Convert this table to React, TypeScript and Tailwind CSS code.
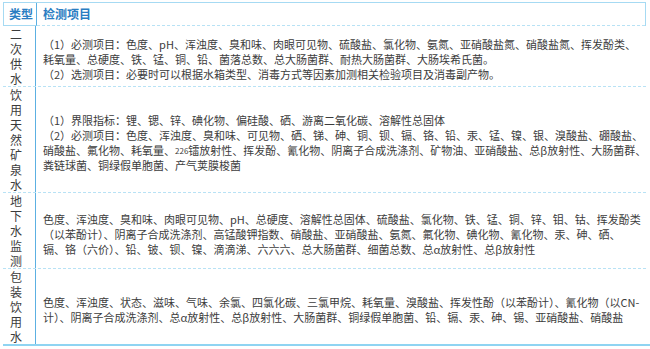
const rows: { type: string; lines: React.ReactNode[] }[] = [
  {
    type: "二次供水",
    lines: [
      "（1）必测项目：色度、pH、浑浊度、臭和味、肉眼可见物、硫酸盐、氯化物、氨氮、亚硝酸盐氮、硝酸盐氮、挥发酚类、",
      "耗氧量、总硬度、铁、锰、铜、铅、菌落总数、总大肠菌群、耐热大肠菌群、大肠埃希氏菌。",
      "（2）选测项目：必要时可以根据水箱类型、消毒方式等因素加测相关检验项目及消毒副产物。",
    ],
  },
  {
    type: "饮用天然矿泉水",
    lines: [
      "（1）界限指标：锂、锶、锌、碘化物、偏硅酸、硒、游离二氧化碳、溶解性总固体",
      "（2）必测项目：色度、浑浊度、臭和味、可见物、硒、锑、砷、铜、钡、镉、铬、铅、汞、锰、镍、银、溴酸盐、硼酸盐、",
      <>
        硝酸盐、氟化物、耗氧量、<sup className="text-[8px] relative -top-[1px]">226</sup>
        镭放射性、挥发酚、氰化物、阴离子合成洗涤剂、矿物油、亚硝酸盐、总β放射性、大肠菌群、
      </>,
      "粪链球菌、铜绿假单胞菌、产气荚膜梭菌",
    ],
  },
  {
    type: "地下水监测",
    lines: [
      "色度、浑浊度、臭和味、肉眼可见物、pH、总硬度、溶解性总固体、硫酸盐、氯化物、铁、锰、铜、锌、钼、钴、挥发酚类",
      "（以苯酚计）、阴离子合成洗涤剂、高锰酸钾指数、硝酸盐、亚硝酸盐、氨氮、氟化物、碘化物、氰化物、汞、砷、硒、",
      "镉、铬（六价）、铅、铍、钡、镍、滴滴涕、六六六、总大肠菌群、细菌总数、总α放射性、总β放射性",
    ],
  },
  {
    type: "包装饮用水",
    lines: [
      "色度、浑浊度、状态、滋味、气味、余氯、四氯化碳、三氯甲烷、耗氧量、溴酸盐、挥发性酚（以苯酚计）、氰化物（以CN-",
      "计）、阴离子合成洗涤剂、总α放射性、总β放射性、大肠菌群、铜绿假单胞菌、铅、镉、汞、砷、锡、亚硝酸盐、硝酸盐",
    ],
  },
];

export default function App() {
  return (
    <div className="w-[650px] h-[349px] bg-white pl-[3px] pt-[2px] font-['Noto_Sans_CJK_SC',sans-serif] text-[11px] text-[#3c3c3c]">
      <div className="w-[643px]">
        {/* header */}
        <div className="flex h-[24px] border-t border-l border-r border-[#a6daf3] font-bold text-[12px] text-[#2a7dc2]">
          <div className="w-[33px] flex items-center justify-center border-r border-b border-r-[#5cb0e2] border-b-[#a6daf3] pl-[2px]">
            类型
          </div>
          <div className="flex-1 flex items-center pl-[6px] border-b border-dashed border-[#b8e2f5]">
            检测项目
          </div>
        </div>

        {rows.map((row, i) => (
          <div
            key={i}
            className={
              "flex " +
              (i === rows.length - 1
                ? "border-b-2 border-[#8fd4f2] w-[647px]"
                : "border-b border-dashed border-[#b8e2f5]")
            }
          >
            <div className="w-[33px] shrink-0 flex flex-col pl-[7px] leading-[15px] text-[12px] border-r border-[#5cb0e2]">
              {row.type.split("").map((c, j) => (
                <span key={j} className="h-[15px] overflow-visible">{c}</span>
              ))}
            </div>
            <div className="flex-1 flex flex-col justify-center pl-[7px] leading-[15px] whitespace-nowrap pt-[7px]">
              {row.lines.map((l, j) => (
                <div key={j}>{l}</div>
              ))}
            </div>
          </div>
        ))}
      </div>
    </div>
  );
}
